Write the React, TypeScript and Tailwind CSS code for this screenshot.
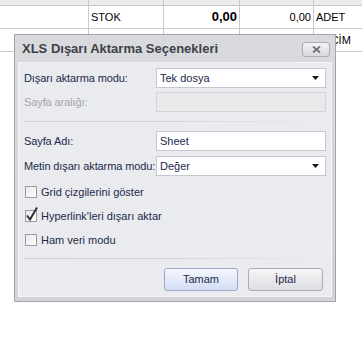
import React from "react";

const FONT = { fontFamily: "'Liberation Sans', Arial, sans-serif" };

function Arrow() {
  return (
    <svg width="7" height="4" viewBox="0 0 7 4" className="shrink-0">
      <path d="M0 0 H7 L3.5 4 Z" fill="#1b1b1b" />
    </svg>
  );
}

function Combo({ value }: { value: string }) {
  return (
    <div className="flex h-[20px] w-[170px] items-center justify-between border border-[#c5c8ce] bg-white pl-[3px] pr-[6px] text-[11px] text-[#1a2a4c]">
      <span>{value}</span>
      <Arrow />
    </div>
  );
}

function TextBox({ value, disabled }: { value: string; disabled?: boolean }) {
  return (
    <div
      className={
        disabled
          ? "flex h-[20px] w-[170px] items-center border border-[#d3d5d9] bg-[#e9eaec] pl-[3px] text-[11px]"
          : "flex h-[20px] w-[170px] items-center border border-[#c5c8ce] bg-white pl-[3px] text-[11px] text-[#1a2a4c]"
      }
    >
      {value}
    </div>
  );
}

function Label({ text, muted }: { text: string; muted?: boolean }) {
  return (
    <span
      className={
        muted
          ? "w-[132px] whitespace-nowrap text-[11px] tracking-[-0.1px] text-[#a3a5a9]"
          : "w-[132px] whitespace-nowrap text-[11px] tracking-[-0.1px] text-[#1a2a4c]"
      }
    >
      {text}
    </span>
  );
}

function Check({ label, checked }: { label: string; checked?: boolean }) {
  return (
    <div className="flex h-[24px] items-center gap-[4px] pl-[1px]">
      <div className="relative h-[12px] w-[12px] border border-[#9a9da3] bg-gradient-to-br from-[#e6e7ea] to-white">
        {checked && (
          <svg width="14" height="16" viewBox="0 0 14 16" className="absolute left-[-1px] top-[-5px]">
            <path d="M2 9.5 L5 13.5 L12 1.5" fill="none" stroke="#2a2a2a" strokeWidth="1.8" />
          </svg>
        )}
      </div>
      <span className="whitespace-nowrap text-[11px] text-[#1a2a4c]">{label}</span>
    </div>
  );
}

function Separator() {
  return <div className="h-px w-[298px] bg-gradient-to-r from-[#cfd1d6] via-[#d3d5da] to-transparent" />;
}

export default function App() {
  return (
    <div className="relative h-[340px] w-[362px] overflow-hidden bg-white" style={FONT}>
      {/* grid behind the dialog */}
      <div className="flex flex-col text-[11px] text-black">
        <div className="-mt-[18px] grid h-[24px] grid-cols-[88px_75px_76px_74px_1fr] border-b border-[#c9c9c9] bg-[#ececec] text-[#333]">
          <div className="flex items-center justify-center" />
          <div className="flex items-center justify-center border-l border-[#c9c9c9]">Kategori</div>
          <div className="flex items-center justify-center border-l border-[#c9c9c9]">Satış Fiyatı</div>
          <div className="flex items-center justify-center border-l border-[#c9c9c9]">Alış Fiyatı</div>
          <div className="flex items-center justify-center border-l border-[#c9c9c9]">Birimi</div>
        </div>
        <div className="grid h-[23px] grid-cols-[88px_75px_76px_74px_1fr] border-b border-[#c9c9c9]">
          <div />
          <div className="flex items-center border-l border-[#c9c9c9] pl-[2px]">STOK</div>
          <div className="flex items-center justify-end border-l border-[#c9c9c9] pr-[2px] text-[13px] font-bold">0,00</div>
          <div className="flex items-center justify-end border-l border-[#c9c9c9] pr-[2px]">0,00</div>
          <div className="flex items-center border-l border-[#c9c9c9] pl-[2px]">ADET</div>
        </div>
        <div className="grid h-[23px] grid-cols-[88px_75px_76px_74px_1fr] border-b border-[#c9c9c9]">
          <div />
          <div className="border-l border-[#c9c9c9]" />
          <div className="border-l border-[#c9c9c9]" />
          <div className="border-l border-[#c9c9c9]" />
          <div className="flex items-center border-l border-[#c9c9c9] pl-[2px]">SEÇİM</div>
        </div>
      </div>

      {/* dialog */}
      <div className="absolute left-[14px] top-[34px] flex h-[268px] w-[322px] flex-col border border-[#a3a5aa] bg-gradient-to-b from-[#d9dade] to-[#d2d3d8] px-[3px] pb-[4px]">
        <div className="flex h-[27px] shrink-0 items-center justify-between pl-[4px] pr-[2px]">
          <span className="text-[13px] font-bold text-[#3d4148]">XLS Dışarı Aktarma Seçenekleri</span>
          <div className="mt-[2px] flex h-[15px] w-[28px] items-center justify-center rounded-[3px] border border-[#a9acb2] bg-gradient-to-b from-[#f4f4f6] to-[#d8d9dd]">
            <svg width="9" height="7" viewBox="0 0 9 7">
              <path d="M1 0.5 L8 6.5 M8 0.5 L1 6.5" stroke="#6e7179" strokeWidth="1.8" />
            </svg>
          </div>
        </div>
        <div className="flex flex-1 flex-col border border-[#f4f5f7] bg-[#eaebef] pl-[5px] pr-[4px] pt-[5px]">
          <div className="flex items-center">
            <Label text="Dışarı aktarma modu:" />
            <Combo value="Tek dosya" />
          </div>
          <div className="mt-[4px] flex items-center">
            <Label text="Sayfa aralığı:" muted />
            <TextBox value="" disabled />
          </div>
          <div className="mt-[9px]">
            <Separator />
          </div>
          <div className="mt-[9px] flex items-center">
            <Label text="Sayfa Adı:" />
            <TextBox value="Sheet" />
          </div>
          <div className="mt-[5px] flex items-center">
            <Label text="Metin dışarı aktarma modu:" />
            <Combo value="Değer" />
          </div>
          <div className="mt-[4px] flex flex-col">
            <Check label="Grid çizgilerini göster" />
            <Check label="Hyperlink'leri dışarı aktar" checked />
            <Check label="Ham veri modu" />
          </div>
          <div className="mt-[6px]">
            <Separator />
          </div>
          <div className="mt-[9px] flex justify-end gap-[10px] pr-[4px]">
            <button className="h-[23px] w-[74px] rounded-[3px] border border-[#9aa8c4] bg-gradient-to-b from-[#f5f7fd] to-[#d3def6] text-[11px] text-[#1a2a4c]">
              Tamam
            </button>
            <button className="h-[23px] w-[75px] rounded-[3px] border border-[#abadb3] bg-gradient-to-b from-[#f6f6f8] to-[#dcdde1] text-[11px] text-[#1a2a4c]">
              İptal
            </button>
          </div>
        </div>
      </div>
    </div>
  );
}
